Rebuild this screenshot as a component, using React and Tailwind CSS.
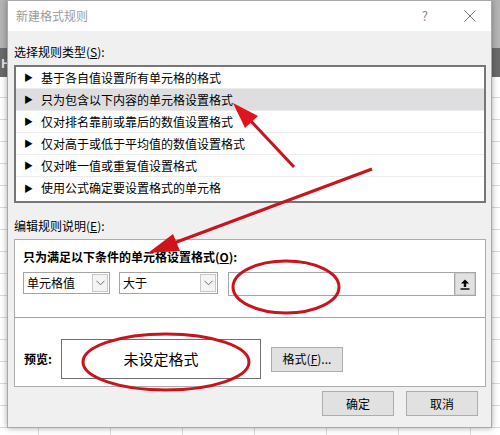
import React from 'react'

const rules = [
  '基于各自值设置所有单元格的格式',
  '只为包含以下内容的单元格设置格式',
  '仅对排名靠前或靠后的数值设置格式',
  '仅对高于或低于平均值的数值设置格式',
  '仅对唯一值或重复值设置格式',
  '使用公式确定要设置格式的单元格',
]

const font = { fontFamily: '"Noto Sans CJK SC", "Noto Sans", sans-serif' }

const Chevron = () => (
  <svg width="9" height="6" viewBox="0 0 9 6">
    <polyline points="0.5,0.8 4.5,4.8 8.5,0.8" fill="none" stroke="#6d6d6d" strokeWidth="1" />
  </svg>
)

const Combo = ({ label, width }) => (
  <div className={`flex h-[22px] items-stretch border border-[#a5a5a5] bg-white ${width}`}>
    <span className="flex-1 pl-[3px] text-[12px] leading-[20px] text-black">{label}</span>
    <span className="m-[1px] flex w-[16px] items-center justify-center border border-[#c8c8c8] bg-[#f4f4f4]">
      <Chevron />
    </span>
  </div>
)

const Btn = ({ children, className = '' }) => (
  <button className={`flex h-[25px] w-[72px] items-center justify-center border border-[#adadad] bg-[#e1e1e1] text-[12px] text-black ${className}`}>
    {children}
  </button>
)

export default function App() {
  return (
    <div className="relative h-[435px] w-[500px] overflow-hidden bg-white" style={font}>
      {/* spreadsheet behind the dialog */}
      <div className="flex h-full flex-col">
        <div className="h-[48px] bg-[#b4b4b4]" />
        <div className="h-[29px] bg-[#6a6a6a] pl-[1px] text-[12px] font-bold leading-[29px] text-[#e8e8e8]">H</div>
        <div className="flex-1 bg-[linear-gradient(to_bottom,#d9d9d9_1px,transparent_1px),linear-gradient(to_right,#d9d9d9_1px,transparent_1px)] bg-size-[72px_22px] bg-position-[38px_20px]" />
      </div>

      {/* dialog window */}
      <div className="absolute left-[7px] top-0 flex h-[428px] w-[485px] flex-col border border-[#a8a8a8] bg-[#f0f0f0] shadow-[0_0_6px_rgba(0,0,0,0.35)]">
        <div className="flex h-[30px] items-center bg-white pl-[8px] text-[12px] text-[#9b9b9b]">
          <span className="flex-1">新建格式规则</span>
          <span className="mr-[36px] text-[13px] text-[#8a8a8a]">?</span>
          <svg width="12" height="12" viewBox="0 0 12 12" className="mr-[15px]">
            <path d="M0.5 0.5 L11.5 11.5 M11.5 0.5 L0.5 11.5" stroke="#777" strokeWidth="1" />
          </svg>
        </div>

        <div className="flex flex-1 flex-col px-[6px]">
          <div className="mt-[13px] h-[16px] text-[12px] leading-[16px] text-black">
            选择规则类型(<span className="underline">S</span>):
          </div>
          <div className="mt-[5px] h-[138px] w-[472px] border-2 border-[#767676] bg-white p-0">
            {rules.map((r, i) => (
              <div
                key={r}
                className={`flex h-[22px] items-center ${i < rules.length - 1 ? 'border-b border-[#ececec]' : ''} ${i === 1 ? 'bg-[#dedee1]' : ''}`}
              >
                <span className="ml-[8px] mr-[8px] text-[9px] leading-none text-black">▶</span>
                <span className="text-[12px] text-black">{r}</span>
              </div>
            ))}
          </div>

          <div className="mt-[15px] h-[16px] text-[12px] leading-[16px] text-black">
            编辑规则说明(<span className="underline">E</span>):
          </div>
          <div className="mt-[5px] flex h-[148px] w-[472px] flex-col border border-[#acacac] bg-white">
            <div className="flex h-[78px] flex-col border-b border-[#a0a0a0] pl-[8px]">
              <div className="mt-[9px] h-[16px] text-[12px] font-bold leading-[16px] text-black">
                只为满足以下条件的单元格设置格式(<span className="underline">O</span>):
              </div>
              <div className="mt-[7px] flex items-start">
                <Combo label="单元格值" width="w-[87px]" />
                <div className="ml-[9px]">
                  <Combo label="大于" width="w-[99px]" />
                </div>
                <div className="ml-[10px] flex h-[24px] w-[248px] border border-[#a5a5a5] bg-white">
                  <div className="flex-1" />
                  <div className="flex w-[21px] items-center justify-center border-l border-[#a5a5a5] bg-[#e1e1e1] shadow-[inset_0_0_0_1px_#cfcfcf]">
                    <svg width="10" height="11" viewBox="0 0 10 11">
                      <path d="M5 0.5 L9 4.5 L6.2 4.5 L6.2 8 L3.8 8 L3.8 4.5 L1 4.5 Z" fill="#000" />
                      <rect x="0.5" y="9.3" width="9" height="1.4" fill="#000" />
                    </svg>
                  </div>
                </div>
              </div>
            </div>
            <div className="flex flex-1 items-start pl-[9px] pt-[21px]">
              <div className="flex h-[40px] items-center">
                <span className="w-[37px] text-[12px] font-bold text-black">预览:</span>
                <div className="flex h-[40px] w-[200px] items-center justify-center border border-[#6f6f6f] bg-white text-[15px] text-black">
                  未设定格式
                </div>
                <Btn className="ml-[10px]">
                  格式(<span className="underline">F</span>)...
                </Btn>
              </div>
            </div>
          </div>

          <div className="mt-[4px] flex justify-end gap-[12px] pr-[7px]">
            <Btn>确定</Btn>
            <Btn>取消</Btn>
          </div>
        </div>
      </div>

      {/* red annotations */}
      <svg className="pointer-events-none absolute inset-0" width="500" height="435" viewBox="0 0 500 435">
        <g stroke="#c8141c" strokeWidth="3" fill="none">
          <line x1="294" y1="167" x2="249" y2="119" />
          <line x1="372" y1="169" x2="174" y2="243" />
          <ellipse cx="286" cy="287" rx="53" ry="26" />
          <ellipse cx="166" cy="362" rx="83" ry="28" />
        </g>
        <polygon points="233,103 258,116 245,128" fill="#e0141c" />
        <polygon points="148,253 180,251 173,234" fill="#d0141c" />
      </svg>
    </div>
  )
}
